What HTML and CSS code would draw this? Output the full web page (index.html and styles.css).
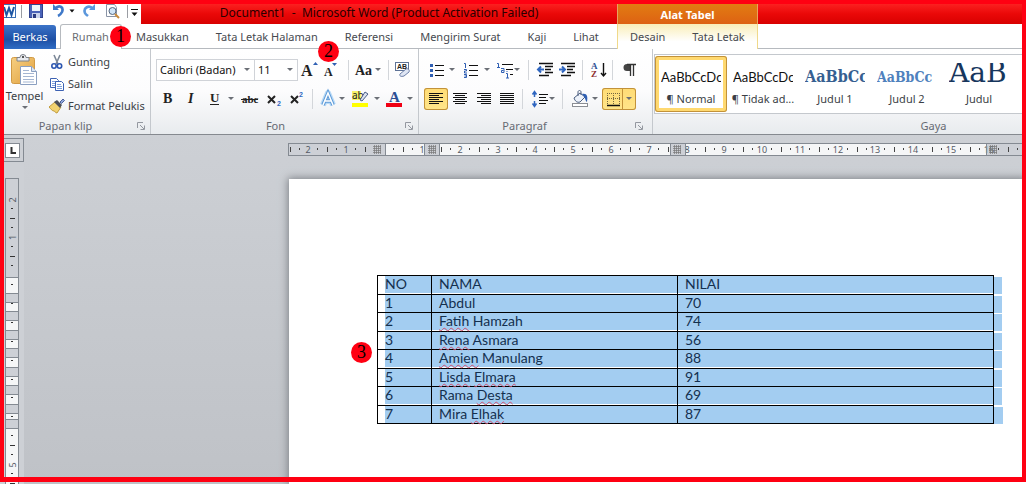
FILE: index.html
```html
<!DOCTYPE html>
<html lang="id">
<head>
<meta charset="utf-8">
<title>Document1 - Microsoft Word</title>
<link rel="stylesheet" href="styles.css">
</head>
<body>
<svg class="defs" width="0" height="0" aria-hidden="true">
  <defs>
    <path id="arrow" d="M0 0h6l-3 3z" fill="#6b6f76"/>
    <linearGradient id="board" x1="0" y1="0" x2="1" y2="1"><stop offset="0" stop-color="#f6cf82"/><stop offset="1" stop-color="#e0a03d"/></linearGradient>
    <g id="launcher" fill="none" stroke="#9498a0"><path d="M.5 6V.5H6"/><path d="M3 3l4 4M7.500 3.500v4h-4"/></g>
    <g id="grip"><path d="M0 1.500h8M0 3.500h8M0 5.500h8M0 7.500h8M1.500 0v9M3.500 0v9M5.500 0v9M7.500 0v9" stroke="#777" stroke-width=".7" fill="none"/></g>
  </defs>
</svg>
<div class="app">
  <header class="titlebar">
    <div class="title-left">
      <div class="quick">
        <svg width="137" height="20" viewBox="4 4 137 20" role="img" aria-label="Akses cepat">
          <rect x="2.500" y="4.500" width="13" height="13" fill="#fff" stroke="#3a6fb5"/>
          <path d="M4 7l2.500 8L9 8l2.500 7L14 7" fill="none" stroke="#1f57a4" stroke-width="2"/>
          <path d="M21.500 5v13M127.500 5v13" stroke="#9a9da3"/>
          <rect x="29.500" y="4.500" width="13" height="13" fill="#4a63b8" stroke="#31438e"/>
          <rect x="32" y="5" width="8" height="6" fill="#eef3fb"/><rect x="32" y="13" width="8" height="5" fill="#c9d3ec"/><rect x="33" y="14" width="3" height="4" fill="#2b3a80"/>
          <path d="M53 4v6h6z" fill="#3f79c9"/><path d="M55 9c4-5 9-2 7 3-1 2-2 3-4 4" fill="none" stroke="#3f79c9" stroke-width="2.600"/>
          <path d="M69.500 9.500h5l-2.500 3zM131.500 12.500h6l-3 3.500z" fill="#111"/><path d="M131 9.500h7" stroke="#111"/>
          <path d="M95 4v6h-6z" fill="#5b97dc"/><path d="M93 9c-4-5-10-1-8 4 1 2 2 2 3 3" fill="none" stroke="#5b97dc" stroke-width="2.600"/>
          <path d="M106.500 4.500h8l2 3v9h-10z" fill="#fff" stroke="#8a94a6"/>
          <circle cx="112.500" cy="11" r="3.500" fill="#cfe4f7" stroke="#56677f"/><path d="M115 14l4 4" stroke="#c98a3a" stroke-width="2"/>
        </svg>
      </div>
      <h1 class="title">Document1 &nbsp;-&nbsp; Microsoft Word (Product Activation Failed)</h1>
    </div>
    <div class="context-title">Alat Tabel</div>
    <div></div>
  </header>

  <nav class="tabs">
    <div class="tab-list">
      <button class="tab file">Berkas</button>
      <button class="tab active">Rumah</button>
      <button class="tab">Masukkan</button>
      <button class="tab">Tata Letak Halaman</button>
      <button class="tab">Referensi</button>
      <button class="tab">Mengirim Surat</button>
      <button class="tab">Kaji</button>
      <button class="tab">Lihat</button>
    </div>
    <div class="tab-list context">
      <button class="tab">Desain</button>
      <button class="tab">Tata Letak</button>
    </div>
    <div></div>
  </nav>

  <section class="ribbon">
    <div class="group clipboard">
      <div class="clip-body">
        <button class="paste">
          <svg width="30" height="34" viewBox="0 0 30 34" aria-hidden="true">
            <rect x="1.500" y="3.500" width="23" height="26" rx="2" fill="url(#board)" stroke="#d19a45"/>
            <path d="M7 7V3.500h3a3 3 0 0 1 6 0h3V7z" fill="#e8eaee" stroke="#7d828b"/><rect x="12" y="2" width="2" height="2" fill="#555"/>
            <path d="M10.500 12.500h11l5 5v13h-16z" fill="#fff" stroke="#8a9fc0"/><path d="M21.500 12.500v5h5" fill="#dce6f4" stroke="#8a9fc0"/>
            <path d="M13 16.500h6M13 19.500h11M13 22.500h11M13 25.500h11M13 28h11" stroke="#a5b6d2"/>
          </svg>
          <span>Tempel</span>
          <svg class="paste-arrow" width="6" height="4" aria-hidden="true"><use href="#arrow"/></svg>
        </button>
        <div class="clip-list">
          <button class="clip-item"><svg width="16" height="16" aria-hidden="true"><path d="M5 1l4 9M11 1L7 10" stroke="#7b8797" stroke-width="1.600" fill="none"/><circle cx="5" cy="12" r="2.200" fill="none" stroke="#2c56b0" stroke-width="1.600"/><circle cx="10.500" cy="12" r="2.200" fill="none" stroke="#2c56b0" stroke-width="1.600"/></svg>Gunting</button>
          <button class="clip-item"><svg width="16" height="16" aria-hidden="true"><path d="M1.500 2.500h6l2 2v7h-8z" fill="#fff" stroke="#3d62b3"/><path d="M3 5.500h4M3 7.500h4M3 9.500h3" stroke="#7fa0dc"/><path d="M6.500 5.500h6l2 2v7h-8z" fill="#fff" stroke="#3d62b3"/><path d="M8 8.500h4M8 10.500h5M8 12.500h5" stroke="#7fa0dc"/></svg>Salin</button>
          <button class="clip-item"><svg width="16" height="16" aria-hidden="true"><path d="M0 9l6-5 6 5-4 6c-2 0-2-2-3-2-2 0-3-2-5-4z" fill="#f1d270" stroke="#c09b3c"/><path d="M5 4l3-2 5 5-2 3z" fill="#4b4f59"/><path d="M11 4l3-3 1.500 1.500-3 3z" fill="#8fa6d8" stroke="#4b5f9b"/></svg>Format Pelukis</button>
        </div>
      </div>
      <div class="group-label"><span>Papan klip</span><svg width="8" height="8" aria-hidden="true"><use href="#launcher"/></svg></div>
    </div>

    <div class="group font">
      <div class="rows">
        <div class="row">
          <span class="combo family"><select aria-label="Fon"><option>Calibri (Badan)</option></select><svg width="6" height="4" aria-hidden="true"><use href="#arrow"/></svg></span>
          <span class="combo size"><select aria-label="Ukuran fon"><option>11</option></select><svg width="6" height="4" aria-hidden="true"><use href="#arrow"/></svg></span>
          <button class="tool" aria-label="Perbesar fon"><svg width="24" height="22"><text x="3" y="17" class="serif-bold" font-size="16">A</text><path d="M15 6h5l-2.500-3z" fill="#2f5fb3"/></svg></button>
          <button class="tool" aria-label="Perkecil fon"><svg width="24" height="22"><text x="2" y="17" class="serif-bold" font-size="12">A</text><path d="M10 4h5l-2.500 3z" fill="#2f5fb3"/></svg></button>
          <i class="sep"></i>
          <button class="tool wide" aria-label="Ubah huruf"><svg width="34" height="22"><text x="3" y="16" class="serif-bold" font-size="14">Aa</text><use href="#arrow" x="23" y="9"/></svg></button>
          <i class="sep"></i>
          <button class="tool" aria-label="Hapus format"><svg width="24" height="22"><rect x="3.500" y="3.500" width="13" height="8" fill="#fff" stroke="#5e7296"/><text x="5" y="10" class="digit dark" font-size="7">AB</text><path d="M8 15l6-5c2-1 4 1 3 3l-5 4c-3 1-5 0-4-2z" fill="#dfe6f4" stroke="#6c7fa8"/></svg></button>
        </div>
        <div class="row">
          <button class="tool" aria-label="Tebal"><svg width="24" height="22"><text x="7" y="15" class="serif-bold" font-size="14">B</text></svg></button>
          <button class="tool" aria-label="Miring"><svg width="24" height="22"><text x="8" y="15" class="serif-bold" font-style="italic" font-size="14">I</text></svg></button>
          <button class="tool wide" aria-label="Garis bawah"><svg width="34" height="22"><text x="6" y="14" class="serif-bold" font-size="13">U</text><path d="M6 16.500h9" stroke="#222"/><use href="#arrow" x="24" y="9"/></svg></button>
          <button class="tool" aria-label="Coret"><svg width="24" height="22"><text x="4" y="15" class="serif-bold" font-size="11">abc</text><path d="M3 11.500h17" stroke="#222"/></svg></button>
          <button class="tool" aria-label="Subskrip"><svg width="24" height="22"><path d="M6 8l7 7M13 8l-7 7" stroke="#222" stroke-width="2"/><text x="15" y="18" class="digit" font-size="7">2</text></svg></button>
          <button class="tool" aria-label="Superskrip"><svg width="24" height="22"><path d="M5 8l7 7M12 8l-7 7" stroke="#222" stroke-width="2"/><text x="13" y="9" class="digit" font-size="7">2</text></svg></button>
          <i class="sep"></i>
          <button class="tool wide" aria-label="Efek teks"><svg width="34" height="22"><path d="M7 17l5-12 5 12M9 13h6" fill="none" stroke="#b9daf6" stroke-width="6" stroke-linejoin="round"/><path d="M7 17l5-12 5 12M9 13h6" fill="none" stroke="#5e9bd8" stroke-width="3.500"/><path d="M7 17l5-12 5 12M9 13h6" fill="none" stroke="#fff" stroke-width="1.500"/><use href="#arrow" x="23" y="9"/></svg></button>
          <button class="tool wide" aria-label="Warna sorotan"><svg width="34" height="22"><rect x="2" y="3" width="9" height="9" fill="#f7f36a"/><text x="2" y="11" font-size="10" fill="#222">ab</text><path d="M10 12l5-8 3 2-6 7z" fill="#dbe3f1" stroke="#4a5d86"/><rect x="2" y="15" width="16" height="4" fill="#ff0"/><use href="#arrow" x="24" y="9"/></svg></button>
          <button class="tool wide" aria-label="Warna fon"><svg width="34" height="22"><text x="5" y="14" class="serif-bold blue" font-size="15">A</text><rect x="2" y="15" width="16" height="4" fill="#f00014"/><use href="#arrow" x="23" y="9"/></svg></button>
        </div>
      </div>
      <div class="group-label"><span>Fon</span><svg width="8" height="8" aria-hidden="true"><use href="#launcher"/></svg></div>
    </div>

    <div class="group paragraph">
      <div class="rows">
        <div class="row">
          <button class="tool wide" aria-label="Poin"><svg width="34" height="22"><path d="M6 5h3v3H6zM6 10h3v3H6zM6 15h3v3H6z" fill="#2f5fb3"/><path d="M11 6.500h9M11 11.500h9M11 16.500h9" stroke="#111"/><use href="#arrow" x="25" y="9"/></svg></button>
          <button class="tool wide" aria-label="Penomoran"><svg width="34" height="22"><path d="M6 4.500h1.500V9M6 10.500h2.500v1.500H6.500v2h2.500M6 15.500h2.500v3H6M6.500 17h2" fill="none" stroke="#2f5fb3"/><path d="M11 6.500h9M11 11.500h9M11 16.500h9" stroke="#111"/><use href="#arrow" x="26" y="9"/></svg></button>
          <button class="tool wide" aria-label="Daftar bertingkat"><svg width="34" height="22"><path d="M5 4.500h1.500V8M5 8.500h3M9 9.500h3v4H9.500v-2h2M14 14.500h1.500V19M14 19h3M15 12v1" fill="none" stroke="#2f5fb3"/><path d="M10 5.500h11M14 10.500h7M18 15.500h3" stroke="#111"/><use href="#arrow" x="22" y="9"/></svg></button>
          <i class="sep"></i>
          <button class="tool" aria-label="Kurangi indentasi"><svg width="24" height="22"><path d="M7 4.500h14M13 7.500h8M13 10.500h6M13 13.500h8M7 16.500h10" stroke="#111" stroke-width="1.500"/><path d="M12 10.500H6M9 7.500l-3 3 3 3" fill="none" stroke="#2f66c0" stroke-width="2"/></svg></button>
          <button class="tool" aria-label="Tambah indentasi"><svg width="24" height="22"><path d="M5 4.500h14M11 7.500h8M11 10.500h6M11 13.500h8M5 16.500h10" stroke="#111" stroke-width="1.500"/><path d="M3 10.500h6M6 7.500l3 3-3 3" fill="none" stroke="#2f66c0" stroke-width="2"/></svg></button>
          <i class="sep"></i>
          <button class="tool" aria-label="Urutkan"><svg width="24" height="22"><text x="5" y="10" font-size="9" class="serif-bold blue">A</text><text x="5" y="18" font-size="9" class="serif-bold brown">Z</text><path d="M17.500 4v13M15 14l2.500 3 2.500-3" fill="none" stroke="#111" stroke-width="1.400"/></svg></button>
          <i class="sep"></i>
          <button class="tool" aria-label="Tampilkan tanda"><svg width="24" height="22"><path d="M14 5h-3a3.500 3.500 0 0 0 0 7h3z" fill="#444"/><path d="M11 5.500h9M14.500 5v12M17.500 5v12" stroke="#333" stroke-width="1.300"/></svg></button>
        </div>
        <div class="row">
          <button class="tool on" aria-label="Rata kiri"><svg width="24" height="22"><path d="M5 5.500h14M5 7.500h10M5 9.500h14M5 11.500h10M5 13.500h14M5 15.500h10" stroke="#111"/></svg></button>
          <button class="tool" aria-label="Rata tengah"><svg width="24" height="22"><path d="M5 5.500h14M7 7.500h10M5 9.500h14M7 11.500h10M5 13.500h14M7 15.500h10" stroke="#111"/></svg></button>
          <button class="tool" aria-label="Rata kanan"><svg width="24" height="22"><path d="M5 5.500h14M9 7.500h10M5 9.500h14M9 11.500h10M5 13.500h14M9 15.500h10" stroke="#111"/></svg></button>
          <button class="tool" aria-label="Rata kiri kanan"><svg width="24" height="22"><path d="M4 5.500h14M4 7.500h14M4 9.500h14M4 11.500h14M4 13.500h14M4 15.500h14" stroke="#111"/></svg></button>
          <i class="sep"></i>
          <button class="tool wide" aria-label="Spasi baris"><svg width="34" height="22"><path d="M13 6.500h9M13 9.500h7M13 12.500h9M13 15.500h7" stroke="#111"/><path d="M8.500 4v5M8.500 13v5M6.500 6.500l2-3 2 3M6.500 15.500l2 3 2-3" fill="none" stroke="#2f66c0" stroke-width="1.500"/><use href="#arrow" x="23" y="9"/></svg></button>
          <i class="sep"></i>
          <button class="tool wide" aria-label="Bayangan"><svg width="34" height="22"><path d="M8 10l6-5 5 4-5 5c-3 1-5-1-6-4z" fill="#edf2fa" stroke="#4c5f80"/><path d="M12 8V4c0-2 3-2 3 0v3" fill="none" stroke="#4c5f80"/><path d="M16 6c5-1 6 2 5 8-2-1-1-4-5-8z" fill="#2f5fb3"/><rect x="6.500" y="15.500" width="15" height="3" fill="#fff" stroke="#8b8e94"/><use href="#arrow" x="26" y="9"/></svg></button>
          <button class="tool wide on split" aria-label="Batas"><svg width="34" height="22"><path d="M5 5.500h13M5 10.500h13M5.500 5v11M11.500 5v11M17.500 5v11" stroke="#77683f" stroke-dasharray="1 1"/><path d="M5 17.500h13" stroke="#111" stroke-width="1.500"/><path d="M20.500 0v22" stroke="#c2923a"/><use href="#arrow" x="24" y="9"/></svg></button>
        </div>
      </div>
      <div class="group-label"><span>Paragraf</span><svg width="8" height="8" aria-hidden="true"><use href="#launcher"/></svg></div>
    </div>

    <div class="group styles">
      <div class="gallery">
        <button class="style on"><span class="sample body">AaBbCcDc</span><span>¶ Normal</span></button>
        <button class="style"><span class="sample body">AaBbCcDc</span><span>¶ Tidak ad...</span></button>
        <button class="style"><span class="sample h1">AaBbCc</span><span>Judul 1</span></button>
        <button class="style"><span class="sample h2">AaBbCc</span><span>Judul 2</span></button>
        <button class="style"><span class="sample doc">AaB</span><span>Judul</span></button>
      </div>
      <div class="group-label"><span>Gaya</span></div>
    </div>
  </section>

  <main class="workspace">
    <aside class="side">
      <div class="tab-stop"><button aria-label="Tab kiri"><svg width="13" height="13"><path d="M5.500 3v6H10" fill="none" stroke="#333" stroke-width="2"/></svg></button></div>
      <svg class="v-ruler" width="14" height="310" viewBox="5 178 14 310" role="img" aria-label="Penggaris vertikal">
        <rect x="5.500" y="178.500" width="13" height="310" fill="#cdd0d6" stroke="#848a92"/>
        <g fill="#f5f6f7" stroke="#848a92">
          <rect x="5.500" y="277.500" width="13" height="16"/><rect x="5.500" y="302.500" width="13" height="9"/><rect x="5.500" y="320.500" width="13" height="10"/><rect x="5.500" y="339.500" width="13" height="9"/><rect x="5.500" y="357.500" width="13" height="10"/><rect x="5.500" y="376.500" width="13" height="9"/><rect x="5.500" y="394.500" width="13" height="10"/><rect x="5.500" y="413.500" width="13" height="6"/><rect x="5.500" y="428.500" width="13" height="70"/>
        </g>
        <path d="M11 208.500h2M11 227.500h2M11 246.500h2M11 265.500h2M11 284.500h2M11 303.500h2M11 322.500h2M11 341.500h2M11 360.500h2M11 379.500h2M11 397.500h2M11 416.500h2M11 435.500h2M11 454.500h2M11 473.500h2M10 218.500h5M10 256.500h5M10 445.500h5M10 483.500h5" stroke="#333"/>
        <g class="ruler-num"><text transform="translate(16 200) rotate(-90)">2</text><text transform="translate(16 237.500) rotate(-90)">1</text><text transform="translate(16 465) rotate(-90)">5</text></g>
      </svg>
    </aside>
    <div class="canvas">
      <svg class="h-ruler" height="13" role="img" aria-label="Penggaris horizontal">
        <rect width="100%" height="13" fill="#cdd0d6"/>
        <rect x="97" width="602" height="13" fill="#f5f6f7"/>
        <g transform="translate(-288 0)">
          <path d="M290.500 4v5M327.500 4v5M365.500 4v5M403.500 4v5M441.500 4v5M479.500 4v5M516.500 4v5M554.500 4v5M592.500 4v5M630.500 4v5M668.500 4v5M705.500 4v5M743.500 4v5M781.500 4v5M819.500 4v5M857.500 4v5M894.500 4v5M932.500 4v5M970.500 4v5M1008.500 4v5M299.500 5v2M317.500 5v2M336.500 5v2M355.500 5v2M393.500 5v2M412.500 5v2M450.500 5v2M469.500 5v2M488.500 5v2M507.500 5v2M526.500 5v2M545.500 5v2M563.500 5v2M582.500 5v2M601.500 5v2M620.500 5v2M639.500 5v2M658.500 5v2M695.500 5v2M714.500 5v2M733.500 5v2M752.500 5v2M771.500 5v2M790.500 5v2M809.500 5v2M828.500 5v2M847.500 5v2M866.500 5v2M884.500 5v2M903.500 5v2M922.500 5v2M941.500 5v2M960.500 5v2M979.500 5v2M998.500 5v2M1017.500 5v2" stroke="#444"/>
          <g class="ruler-num"><text x="308" y="10">2</text><text x="346" y="10">1</text><text x="422" y="10">1</text><text x="460" y="10">2</text><text x="498" y="10">3</text><text x="535" y="10">4</text><text x="573" y="10">5</text><text x="611" y="10">6</text><text x="649" y="10">7</text><text x="687" y="10">8</text><text x="724" y="10">9</text><text x="762" y="10">10</text><text x="800" y="10">11</text><text x="838" y="10">12</text><text x="875" y="10">13</text><text x="913" y="10">14</text><text x="951" y="10">15</text><text x="989" y="10">16</text></g>
          <path d="M425 0h14v13h-14zM671 0h14v13h-14z" fill="#cdd0d6"/>
          <path d="M288.500 0v13M385.500 0v13M424.500 0v13M439.500 0v13M670.500 0v13M685.500 0v13M986.500 0v13" stroke="#848a92"/>
          <use href="#grip" x="373" y="2"/><use href="#grip" x="428" y="2"/><use href="#grip" x="673" y="2"/><use href="#grip" x="989" y="2"/>
        </g>
        <path d="M0 .5h2000M0 12.500h2000" stroke="#848a92"/>
      </svg>
      <article class="page">
        <table>
          <colgroup><col class="c-no"><col class="c-name"><col><col class="c-end"></colgroup>
          <tbody>
            <tr><td>NO</td><td>NAMA</td><td>NILAI</td><td></td></tr>
            <tr><td>1</td><td>Abdul</td><td>70</td><td></td></tr>
            <tr><td>2</td><td><u>Fatih</u> Hamzah</td><td>74</td><td></td></tr>
            <tr><td>3</td><td><u>Rena</u> Asmara</td><td>56</td><td></td></tr>
            <tr><td>4</td><td><u>Amien</u> Manulang</td><td>88</td><td></td></tr>
            <tr><td>5</td><td><u>Lisda</u> <u>Elmara</u></td><td>91</td><td></td></tr>
            <tr><td>6</td><td>Rama <u>Desta</u></td><td>69</td><td></td></tr>
            <tr><td>7</td><td>Mira <u>Elhak</u></td><td>87</td><td></td></tr>
          </tbody>
        </table>
      </article>
    </div>
  </main>
  <div class="frame"></div>
  <span class="mark one">1</span>
  <span class="mark two">2</span>
  <span class="mark three">3</span>
</div>
</body>
</html>
```
FILE: styles.css
```css
* { box-sizing: border-box; }
body {
  margin: 0;
  font-family: "Noto Sans", "Open Sans", sans-serif;
  font-size: 11px;
  line-height: 16px;
  color: #3b3f46;
}
button {
  margin: 0;
  padding: 0;
  border: 0;
  background: none;
  font: inherit;
  color: inherit;
}
svg { display: block; flex: none; }
.defs { position: absolute; }
.app {
  position: relative;
  display: flex;
  flex-direction: column;
  height: 100vh;
  overflow: hidden;
}

/* Title bar */
.titlebar, .tabs {
  display: grid;
  grid-template-columns: 617px 141px 1fr;
}
.titlebar {
  flex: none;
  height: 24px;
  padding-top: 4px;
  background: linear-gradient(#fb2020 4px, #ea0808 14px, #d80000);
}
.title-left { display: flex; }
.quick { flex: none; padding-left: 4px; background: #fff; }
.title {
  flex: 1;
  margin: 0;
  font-size: 12px;
  font-weight: 400;
  line-height: 18px;
  text-align: center;
  white-space: nowrap;
  color: #2a0000;
}
.context-title {
  border-left: 1px solid #e9a35f;
  border-right: 1px solid #e9a35f;
  background: linear-gradient(#e27c12, #dd5f13);
  color: #fff;
  font-weight: 700;
  line-height: 22px;
  text-align: center;
}

/* Tabs */
.tabs {
  flex: none;
  height: 25px;
  border-bottom: 1px solid #b6babf;
  background: #fff;
}
.tab-list { display: flex; }
.tab { flex: none; padding: 0 13px 0 14px; color: #46494f; white-space: nowrap; }
.tab.file {
  width: 52px;
  margin: 1px 4px 0 4px;
  padding: 0;
  border-radius: 0 3px 0 0;
  background: linear-gradient(#3c74c8, #1d4fa4 60%, #2f6cc4);
  color: #fff;
}
.tab.active {
  height: 25px;
  padding: 0 12px 0 11px;
  border: 1px solid #b6babf;
  border-bottom: 0;
  border-radius: 3px 3px 0 0;
  background: #fff;
  color: #6a6d73;
}
.context {
  border-left: 1px solid #f0d98a;
  border-right: 1px solid #f0d98a;
  background: linear-gradient(#f9eeb8, #fff 70%);
}
.context .tab { padding: 0 15px 0 12px; }

/* Ribbon */
.ribbon {
  display: flex;
  flex: none;
  height: 86px;
  padding-left: 4px;
  overflow: hidden;
  border-bottom: 1px solid #85898f;
  background: linear-gradient(#fff, #fcfcfd 50%, #e8ebee);
}
.group {
  display: flex;
  flex: none;
  flex-direction: column;
  justify-content: space-between;
  border-right: 1px solid #c4c8cd;
}
.group-label {
  display: flex;
  align-items: center;
  height: 17px;
  padding-right: 5px;
  color: #666a73;
}
.group-label span { flex: 1; padding-right: 10px; text-align: center; }
.clipboard { width: 147px; }
.font { width: 268px; padding-left: 5px; }
.paragraph { width: 234px; padding-left: 5px; }
.paragraph .group-label { padding-right: 9px; }
.styles { width: 576px; padding-left: 1px; }
.clip-body { display: flex; padding-top: 2px; }
.paste {
  display: flex;
  flex-direction: column;
  align-items: center;
  width: 41px;
  height: 64px;
  padding-top: 3px;
}
.paste-arrow { margin-top: 2px; }
.clip-list { flex: 1; padding-left: 4px; }
.clip-item {
  display: flex;
  gap: 3px;
  align-items: center;
  height: 22px;
  white-space: nowrap;
}
.rows { display: flex; flex-direction: column; gap: 7px; padding-top: 10px; }
.row { display: flex; height: 22px; }
.combo {
  display: flex;
  align-items: center;
  padding-right: 4px;
  border: 1px solid #d0d3d8;
  background: #fff;
}
.family { width: 99px; }
.size { width: 44px; margin-left: -1px; }
select {
  flex: 1;
  min-width: 0;
  margin: 0;
  padding: 0 0 0 3px;
  border: 0;
  appearance: none;
  background: none;
  font: inherit;
  color: #111;
}
.tool { flex: none; width: 24px; height: 22px; }
.wide { width: 34px; }
.on {
  border-radius: 3px;
  background: linear-gradient(#ffdc75, #ffe58a);
  box-shadow: inset 0 0 0 1px #c2923a;
}
.split { margin-left: 2px; }
.sep {
  flex: none;
  width: 1px;
  margin: 1px 3px 1px 2px;
  background: #d3d6da;
}
.serif-bold { font-family: "Liberation Serif", serif; font-weight: 700; fill: #222; }
.serif-bold.blue { fill: #2b4f94; }
.serif-bold.brown { fill: #8e3030; }
.digit { font-family: "Liberation Sans", sans-serif; font-weight: 700; fill: #2f66c0; }
.digit.dark { fill: #222; }

/* Style gallery */
.gallery {
  display: flex;
  height: 60px;
  margin-top: 5px;
  border: 1px solid #c4c8cd;
  background: #fff;
}
.style {
  display: flex;
  flex: none;
  flex-direction: column;
  align-items: center;
  justify-content: space-between;
  width: 72px;
  height: 56px;
  margin-top: 1px;
  padding: 7px 6px 5px;
  white-space: nowrap;
}
.style.on {
  background: #fff;
  box-shadow: inset 0 0 0 1px #c2923a, inset 0 0 0 4px #ffd970;
}
.sample {
  align-self: stretch;
  height: 24px;
  overflow: hidden;
  line-height: 28px;
  text-align: left;
}
.body { font-family: Lato, sans-serif; font-size: 13px; color: #111; }
.h1, .h2 { font-family: "DejaVu Serif Condensed", "DejaVu Serif", serif; font-weight: 700; }
.h1 { font-size: 16px; color: #365f91; }
.h2 { font-size: 14px; color: #4f81bd; }
.doc {
  font-family: "DejaVu Serif", serif;
  font-size: 28px;
  line-height: 20px;
  color: #17365d;
}

/* Workspace */
.workspace {
  display: grid;
  flex: 1;
  grid-template-columns: 24px 1fr;
  min-height: 0;
  background: #cdd0d5;
}
.side { padding: 3px 0 0 4px; overflow: hidden; }
.tab-stop {
  height: 24px;
  margin-bottom: 16px;
  padding: 4px 0 0 1px;
  border: 1px solid #848a92;
  border-left: 0;
}
.tab-stop button { width: 15px; height: 15px; border: 1px solid #848a92; background: #fff; }
.v-ruler { margin-left: 1px; }
.canvas {
  display: flex;
  flex-direction: column;
  min-width: 0;
  padding: 8px 0 0 264px;
  overflow: hidden;
  background: linear-gradient(#cdd0d5, #bfc2c7);
}
.h-ruler { width: 100%; }
.page {
  flex: 1;
  margin-top: 23px;
  margin-left: 1px;
  padding: 96px 23px 0 88px;
  background: #fff;
  box-shadow: 0 0 8px 1px #7d8186;
}
.ruler-num { font-size: 9px; fill: #555b66; text-anchor: middle; }

/* Document table */
table {
  width: 100%;
  border-collapse: collapse;
  table-layout: fixed;
  font-family: Lato, sans-serif;
  font-size: 14px;
  line-height: 16px;
  color: #14304f;
}
.c-no { width: 54px; }
.c-name { width: 246px; }
.c-end { width: 9px; }
tr { height: 19px; }
tr:nth-child(even) { height: 18px; }
td {
  padding: 0 0 0 7px;
  border: 1px solid #000;
  background: linear-gradient(#a3cdf1, #a3cdf1) 0 0 / 100% 17px no-repeat;
  vertical-align: top;
}
td:first-child { background-position: 7px 0; }
td:last-child { border: 0; background-position: 0 1px; }
u {
  text-decoration: underline wavy #d0506e 1px;
  text-underline-offset: 1px;
  text-decoration-skip-ink: none;
}

/* Callouts */
.frame {
  position: absolute;
  inset: 0 0 2px;
  border: 4px solid #ff0012;
  border-bottom-width: 5px;
  pointer-events: none;
}
.mark {
  position: absolute;
  width: 21px;
  height: 21px;
  border-radius: 50%;
  background: #ff0012;
  font: 18px/21px "Liberation Serif", serif;
  text-align: center;
  color: #000;
}
.one { left: 110px; top: 26px; }
.two { left: 318px; top: 41px; }
.three { left: 351px; top: 342px; }
```
